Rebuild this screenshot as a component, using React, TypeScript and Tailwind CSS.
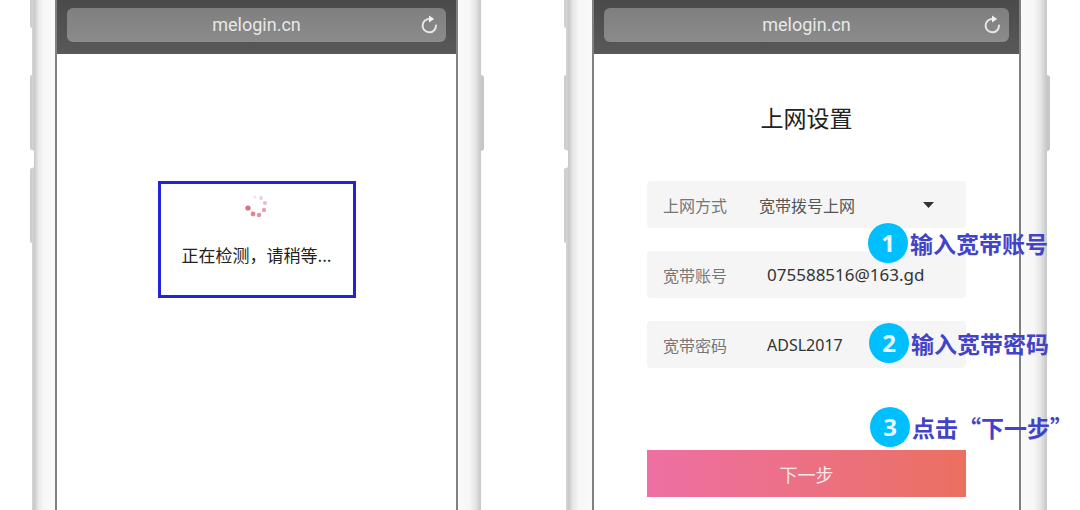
import React from "react";

const SPINNER_DOTS = [
  { x: 10, y: 2, r: 1.5, opacity: 0.2 },
  { x: 16, y: 3, r: 1.9, opacity: 0.35 },
  { x: 20, y: 8, r: 2.1, opacity: 0.45 },
  { x: 19, y: 15, r: 2.2, opacity: 0.6 },
  { x: 14, y: 20, r: 2.3, opacity: 0.7 },
  { x: 8, y: 19, r: 2.4, opacity: 0.8 },
  { x: 3, y: 13, r: 2.6, opacity: 0.95 },
];

const Spinner = () => (
  <svg width="24" height="24" viewBox="0 0 24 24" aria-hidden="true">
    {SPINNER_DOTS.map((dot) => (
      <circle
        key={`${dot.x}-${dot.y}`}
        cx={dot.x}
        cy={dot.y}
        r={dot.r}
        fill="#d9667a"
        opacity={dot.opacity}
      />
    ))}
  </svg>
);

const ReloadIcon = () => (
  <svg width="18" height="20" viewBox="0 0 18 20" fill="none" aria-hidden="true">
    <path
      d="M10 4A6.7 6.7 0 1 0 16 10.6"
      stroke="#e6e6e6"
      strokeWidth="2"
      strokeLinecap="round"
    />
    <path d="M9 0.6L14.2 4L9 7.4Z" fill="#f2f2f2" />
  </svg>
);

const BrowserBar = () => (
  <div className="bg-gradient-to-b from-[#4a4a4a] to-[#595959] px-[10px] pt-2 pb-3">
    <div className="flex h-[34px] items-center rounded-md bg-gradient-to-b from-[#7f7f7f] to-[#8b8b8b] px-2">
      <span className="w-[18px]" />
      <span className="flex-1 text-center font-[Roboto,sans-serif] text-lg leading-6 text-[#e8e8e8]">
        melogin.cn
      </span>
      <button type="button" aria-label="刷新">
        <ReloadIcon />
      </button>
    </div>
  </div>
);

type PhoneProps = {
  bezel: string;
  children: React.ReactNode;
};

const Phone = ({ bezel, children }: PhoneProps) => (
  <section className="relative flex min-h-screen min-w-0">
    {/* side keys */}
    <div className="absolute top-0 -left-[2px] h-7 w-[2px] rounded-bl bg-[#cfcfcf]" />
    <div className="absolute top-[75px] -left-[2px] h-[75px] w-[2px] rounded-l bg-[#cdcdcd]" />
    <div className="absolute top-[168px] -left-[2px] h-[75px] w-[2px] rounded-l bg-[#cdcdcd]" />
    <div className="absolute top-[75px] -right-[3px] h-[76px] w-[3px] rounded-r bg-[#c6c6c6]" />

    <div
      className={`${bezel} shrink-0 bg-[linear-gradient(to_right,#d6d6d6,#c9c9c9_10%,#e9e9e9_28%,#f7f7f7_50%,#fafafa)]`}
    />
    <div className="absolute top-[150px] left-0 h-[18px] w-[2px] rounded-r bg-white" />
    <div className="min-w-0 flex-1 border-x-2 border-[#808080] bg-white">
      <BrowserBar />
      {children}
    </div>
    <div
      className={`${bezel} shrink-0 bg-[linear-gradient(to_left,#c9c9c9,#cfcfcf_8%,#e6e6e6_24%,#f6f6f6_50%,#fafafa)]`}
    />
  </section>
);

type CalloutProps = {
  step: number;
  text: string;
  position: string;
};

const Callout = ({ step, text, position }: CalloutProps) => (
  <div
    className={`pointer-events-none absolute z-10 flex items-center gap-[2px] whitespace-nowrap ${position}`}
  >
    <span className="flex size-10 items-center justify-center rounded-full bg-[#00bfff] font-['Noto_Sans',sans-serif] text-2xl font-bold text-[#e9fbff]">
      {step}
    </span>
    <span className="text-[23px] leading-8 font-bold text-[#4343c8]">{text}</span>
  </div>
);

const rowClass = "relative flex h-[47px] items-center rounded-sm bg-[#f5f5f5] pl-4";
const labelClass = "shrink-0 text-base text-[#777777]";
const inputClass =
  "ml-10 min-w-0 flex-1 bg-transparent font-['Noto_Sans','Noto_Sans_CJK_SC',sans-serif] text-[#333333] outline-none";

const DetectingScreen = () => (
  <div className="flex justify-center pt-[127px]">
    <div
      role="status"
      className="flex h-[117px] w-[198px] flex-col items-center border-3 border-[#2424d6] pt-[11px]"
    >
      <Spinner />
      <p className="mt-6 text-[17px] leading-6 whitespace-nowrap text-[#222222]">
        正在检测，请稍等...
      </p>
    </div>
  </div>
);

const SetupScreen = () => (
  <div className="px-[53px] pt-[47px]">
    <h1 className="text-center text-[23px] leading-8 text-[#222222]">上网设置</h1>

    <form className="mt-12 flex flex-col gap-[23px]" onSubmit={(e) => e.preventDefault()}>
      <div className={rowClass}>
        <label htmlFor="mode" className={labelClass}>
          上网方式
        </label>
        <select
          id="mode"
          className="ml-8 min-w-0 flex-1 appearance-none bg-transparent text-base text-[#555555] outline-none"
        >
          <option>宽带拨号上网</option>
        </select>
        <svg
          className="pointer-events-none absolute right-8"
          width="11"
          height="6"
          viewBox="0 0 11 6"
          aria-hidden="true"
        >
          <path d="M0 0H11L5.5 6Z" fill="#333333" />
        </svg>
        <Callout step={1} text="输入宽带账号" position="top-[42px] left-[221px]" />
      </div>

      <div className={rowClass}>
        <label htmlFor="account" className={labelClass}>
          宽带账号
        </label>
        <input
          id="account"
          type="text"
          defaultValue="075588516@163.gd"
          className={`${inputClass} text-[17px]`}
        />
      </div>

      <div className={rowClass}>
        <label htmlFor="password" className={labelClass}>
          宽带密码
        </label>
        <input
          id="password"
          type="text"
          defaultValue="ADSL2017"
          className={`${inputClass} text-base`}
        />
        <Callout step={2} text="输入宽带密码" position="top-[2px] left-[222px]" />
      </div>

      <div className="relative mt-[59px]">
        <button
          type="submit"
          className="h-[47px] w-full bg-gradient-to-r from-[#ee6fa3] to-[#eb7060] text-lg text-[#fde8ea]"
        >
          下一步
        </button>
        <Callout step={3} text="点击“下一步”" position="-top-[43px] left-[223px]" />
      </div>
    </form>
  </div>
);

export default function App() {
  return (
    <main
      lang="zh-CN"
      className="grid min-h-screen grid-cols-[449fr_481fr] gap-[85px] overflow-hidden bg-white pr-[33px] pl-8 font-['Noto_Sans_CJK_SC',sans-serif]"
    >
      <Phone bezel="w-[23px]">
        <DetectingScreen />
      </Phone>
      <Phone bezel="w-[26px]">
        <SetupScreen />
      </Phone>
    </main>
  );
}
